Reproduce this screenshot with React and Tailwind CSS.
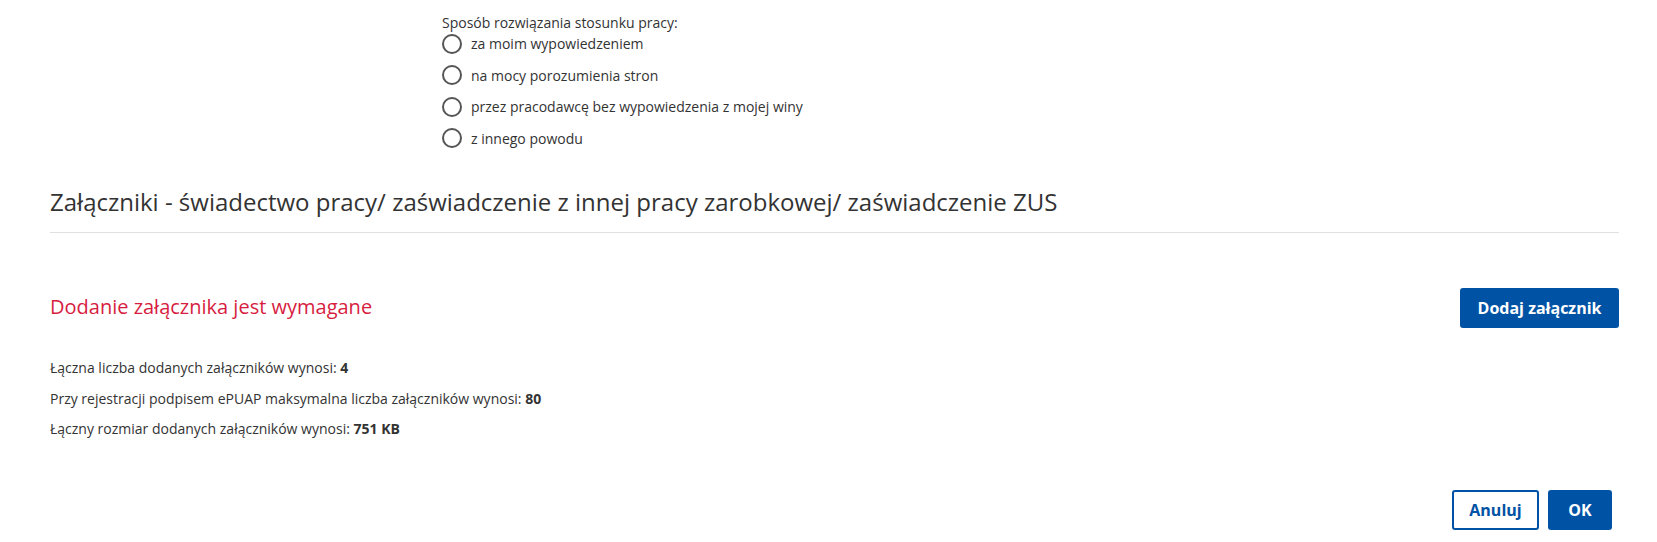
import React, { useState } from "react";

const OPTIONS = [
    "za moim wypowiedzeniem",
    "na mocy porozumienia stron",
    "przez pracodawcę bez wypowiedzenia z mojej winy",
    "z innego powodu",
];

function Radio({ label, checked, onChange }) {
    return (
        <label className="flex items-center gap-[9px] h-[31.5px] cursor-pointer">
            <span className="w-[20px] h-[20px] rounded-full border-2 border-[#555] flex items-center justify-center">
                {checked && <span className="w-[10px] h-[10px] rounded-full bg-[#0052a5]" />}
            </span>
            <input type="radio" className="hidden" checked={checked} onChange={onChange} />
            <span className="text-[14px] text-[#333]">{label}</span>
        </label>
    );
}

export default function App() {
    const [reason, setReason] = useState(null);

    return (
        <div className="w-full min-h-[542px] bg-white text-[#333] font-['Open_Sans',sans-serif]">
            <div className="pl-[442px] pt-[13px]">
                <div className="text-[14px] leading-[20px]">Sposób rozwiązania stosunku pracy:</div>
                <div className="flex flex-col -mt-[5px]">
                    {OPTIONS.map((o, i) => (
                        <Radio key={o} label={o} checked={reason === i} onChange={() => setReason(i)} />
                    ))}
                </div>
            </div>

            <div className="pl-[50px] pr-[38px]">
                <h2 className="mt-[32px] text-[24px] leading-[32px] text-[#333] pb-[14px] border-b border-[#e0e0e0]">
                    Załączniki - świadectwo pracy/ zaświadczenie z innej pracy zarobkowej/ zaświadczenie ZUS
                </h2>

                <div className="mt-[55px] flex items-center justify-between">
                    <div className="text-[20px] text-[#d71d3f] -mt-[2px]">Dodanie załącznika jest wymagane</div>
                    <button className="h-[40px] px-[17.5px] rounded-[3px] bg-[#0052a5] text-white text-[16px] font-bold">
                        Dodaj załącznik
                    </button>
                </div>

                <div className="mt-[30px] flex flex-col gap-[10.5px] text-[14px] leading-[20px]">
                    <div>Łączna liczba dodanych załączników wynosi: <b>4</b></div>
                    <div>Przy rejestracji podpisem ePUAP maksymalna liczba załączników wynosi: <b>80</b></div>
                    <div>Łączny rozmiar dodanych załączników wynosi: <b>751 KB</b></div>
                </div>
            </div>

            <div className="mt-[51px] pr-[45px] flex justify-end gap-[9px]">
                <button className="h-[40px] w-[87px] rounded-[3px] border-2 border-[#0052a5] text-[#0052a5] text-[16px] font-bold">
                    Anuluj
                </button>
                <button className="h-[40px] w-[64px] rounded-[3px] bg-[#0052a5] text-white text-[16px] font-bold">
                    OK
                </button>
            </div>
        </div>
    );
}
